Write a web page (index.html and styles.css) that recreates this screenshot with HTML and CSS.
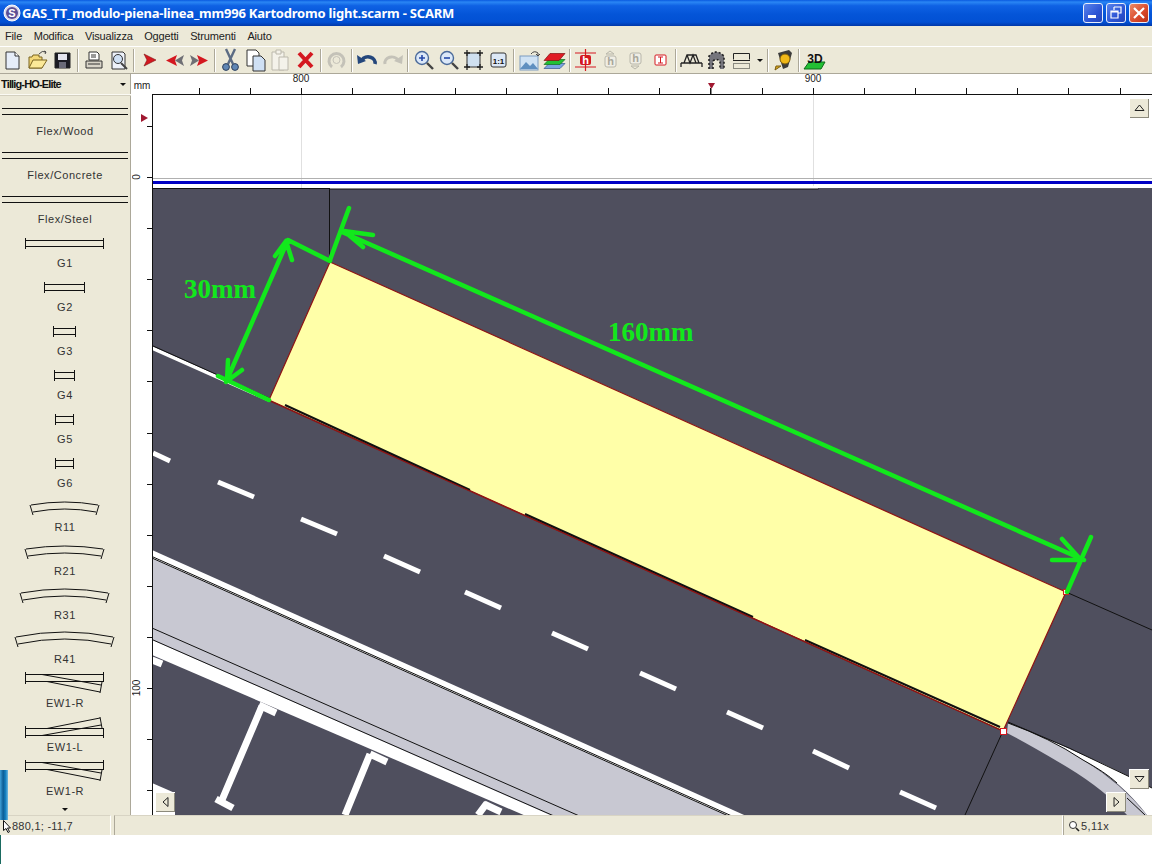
FILE: index.html
```html
<!DOCTYPE html>
<html lang="it">
<head>
<meta charset="utf-8">
<title>SCARM</title>
<link rel="stylesheet" href="styles.css">
</head>
<body>
<div class="app">
  <header class="titlebar">
    <svg class="appicon" viewBox="0 0 18 18" width="18" height="18"><circle cx="9" cy="9" r="8" fill="#d9d9ea" stroke="#ffffff"/><circle cx="9" cy="9" r="6" fill="#5b4f96"/><text x="9" y="13" class="appicon-s">S</text></svg>
    <span class="title-text">GAS_TT_modulo-piena-linea_mm996 Kartodromo light.scarm - SCARM</span>
    <div class="winbtns">
      <div class="winbtn"><svg viewBox="0 0 20 20" width="20" height="20"><rect x="5" y="12" width="8" height="3" fill="#fff"/></svg></div>
      <div class="winbtn"><svg viewBox="0 0 20 20" width="20" height="20"><path d="M8 4h7v6h-3M8 4v3M5 8h7v7H5zM5 9h7" fill="none" stroke="#fff" stroke-width="1.2"/></svg></div>
      <div class="winbtn close"><svg viewBox="0 0 20 20" width="20" height="20"><path d="M5 5l10 10M15 5L5 15" stroke="#fff" stroke-width="2.2"/></svg></div>
    </div>
  </header>

  <nav class="menubar">
    <span class="menu-item">File</span>
    <span class="menu-item">Modifica</span>
    <span class="menu-item">Visualizza</span>
    <span class="menu-item">Oggetti</span>
    <span class="menu-item">Strumenti</span>
    <span class="menu-item">Aiuto</span>
  </nav>

  <div class="toolbar">
    <svg class="tb" viewBox="0 0 25 26"><path d="M6 5h9l4 4v13H6z" fill="#e6edf8" stroke="#333"/><path d="M15 5v4h4" fill="#fff" stroke="#333"/></svg>
    <svg class="tb" viewBox="0 0 25 26"><path d="M4 21V10h3l1-2h6v2h3v11z" fill="#f3d878" stroke="#7a6420"/><path d="M4 21l4-8h14l-5 8z" fill="#fbe998" stroke="#7a6420"/><path d="M14 7q3-4 7-2m0 0l-2-1m2 1l-1 2" fill="none" stroke="#444"/></svg>
    <svg class="tb" viewBox="0 0 25 26"><path d="M5 6h15v15H5z" fill="#1c1c24" stroke="#222"/><rect x="8" y="7" width="9" height="6" fill="#e4e4ee"/><rect x="9" y="15" width="7" height="6" fill="#6a6a78"/></svg>
    <i class="sep"></i>
    <svg class="tb" viewBox="0 0 25 26"><path d="M8 5h8l2 2v6H8z" fill="#fff" stroke="#333"/><path d="M10 8h5M10 10h5" stroke="#333"/><path d="M5 14h16v7H5z" fill="#d8d4c8" stroke="#333"/><path d="M7 17h12" stroke="#333"/></svg>
    <svg class="tb" viewBox="0 0 25 26"><path d="M6 5h11l2 2v15H6z" fill="#eef2fa" stroke="#333"/><circle cx="12" cy="12" r="4.5" fill="#cfe0f4" stroke="#333"/><path d="M15 16l6 6" stroke="#444" stroke-width="2"/></svg>
    <i class="sep"></i>
    <svg class="tb" viewBox="0 0 25 26"><path d="M7 7l12 6-12 6 3-6z" fill="#d41820" stroke="#801010" stroke-width=".6"/></svg>
    <svg class="tb" viewBox="0 0 25 26"><path d="M15 8L4 13.500 15 19l-2-5.500z" fill="#d41820"/><path d="M22 8l-9 5.500 9 5.500-2-5.500z" fill="#6f6f74"/></svg>
    <svg class="tb" viewBox="0 0 25 26"><path d="M3 8l9 5.500L3 19l2-5.500z" fill="#6f6f74"/><path d="M10 8l11 5.500L10 19l2-5.500z" fill="#d41820"/></svg>
    <i class="sep"></i>
    <svg class="tb" viewBox="0 0 25 26"><path d="M8 2l7 15M17 2l-7 15" stroke="#5c6c84" stroke-width="2.4"/><circle cx="8" cy="20" r="3.4" fill="#5f86b4" stroke="#2d3f5c"/><circle cx="17" cy="20" r="3.4" fill="#5f86b4" stroke="#2d3f5c"/></svg>
    <svg class="tb" viewBox="0 0 25 26"><path d="M4 3h9l3 3v13H4z" fill="#fff" stroke="#333"/><path d="M10 9h8l4 4v11H10z" fill="#cfe0f4" stroke="#333"/></svg>
    <svg class="tb" viewBox="0 0 25 26"><path d="M4 5h12v18H4z" fill="#f4f2ea" stroke="#bbb8ac"/><path d="M8 3h5v4H8z" fill="#f4f2ea" stroke="#bbb8ac"/><path d="M11 10h9v13h-9z" fill="#f4f2ea" stroke="#bbb8ac"/></svg>
    <svg class="tb" viewBox="0 0 25 26"><path d="M6 6l13 14M19 6L6 20" stroke="#d41820" stroke-width="4"/></svg>
    <i class="sep"></i>
    <svg class="tb" viewBox="0 0 25 26"><path d="M8 20a7.500 7.500 0 1 1 9 0" fill="none" stroke="#c4c2b8" stroke-width="3"/><circle cx="12.500" cy="13" r="3.500" fill="none" stroke="#c4c2b8"/></svg>
    <i class="sep"></i>
    <svg class="tb" viewBox="0 0 25 26"><path d="M7 13a7 6 0 0 1 13 4" fill="none" stroke="#24477c" stroke-width="3.600"/><path d="M2 8l1 9 8-3z" fill="#24477c"/></svg>
    <svg class="tb" viewBox="0 0 25 26"><path d="M18 13a7 6 0 0 0-13 4" fill="none" stroke="#c4c2b8" stroke-width="3"/><path d="M23 8l-1 9-8-3z" fill="#c4c2b8"/></svg>
    <i class="sep"></i>
    <svg class="tb" viewBox="0 0 25 26"><circle cx="11" cy="11" r="6.500" fill="#dbe8f8" stroke="#4a6a9a" stroke-width="1.400"/><path d="M8 11h6M11 8v6" stroke="#2448a8" stroke-width="1.600"/><path d="M16 16l6 6" stroke="#444" stroke-width="2.400"/></svg>
    <svg class="tb" viewBox="0 0 25 26"><circle cx="11" cy="11" r="6.500" fill="#dbe8f8" stroke="#4a6a9a" stroke-width="1.400"/><path d="M8 11h6" stroke="#2448a8" stroke-width="1.600"/><path d="M16 16l6 6" stroke="#444" stroke-width="2.400"/></svg>
    <svg class="tb" viewBox="0 0 25 26"><rect x="6" y="6" width="13" height="14" fill="#cfe0f0" stroke="#333"/><path d="M3 6h6M6 3v6M16 6h6M19 3v6M3 20h6M6 17v6M16 20h6M19 17v6" stroke="#222" stroke-width="1.300"/></svg>
    <svg class="tb" viewBox="0 0 25 26"><rect x="5" y="6" width="15" height="14" rx="2" fill="#dce8f6" stroke="#333"/><text x="12.500" y="16.500" class="tb-txt">1:1</text></svg>
    <i class="sep"></i>
    <svg class="tb" viewBox="0 0 25 26"><rect x="3" y="9" width="18" height="14" fill="#cfe2f4" stroke="#7c9cc0"/><path d="M3 22l6-7 4 4 3-3 5 6z" fill="#5f8fc0"/><path d="M14 7q3-4 7-1v3m0 0l-2-2m2 2l2-2" fill="none" stroke="#444"/></svg>
    <svg class="tb" viewBox="0 0 25 26"><path d="M2 21.500l5-5h16l-5 5z" fill="#7aa4e0" stroke="#33558c" stroke-width=".7"/><path d="M2 17.500l5-5h16l-5 5z" fill="#22c034" stroke="#116a1c" stroke-width=".7"/><path d="M2 13.500l6-7h15l-6 7z" fill="#e01c24" stroke="#801010" stroke-width=".7"/></svg>
    <i class="sep"></i>
    <svg class="tb" viewBox="0 0 25 26"><path d="M2 6h21M2 20h21M12.500 2v22" stroke="#d41820" stroke-width="1.200"/><rect x="7" y="8" width="11" height="10" rx="2" fill="#d41820"/><text x="12.500" y="17" class="tb-h">h</text></svg>
    <svg class="tb" viewBox="0 0 25 26"><path d="M8 7l4-3 4 3z" fill="none" stroke="#b8b6aa"/><rect x="7" y="9" width="11" height="11" rx="2" fill="#efede4" stroke="#b8b6aa"/><text x="12.500" y="18" class="tb-h dim">h</text></svg>
    <svg class="tb" viewBox="0 0 25 26"><rect x="7" y="6" width="11" height="11" rx="2" fill="#efede4" stroke="#b8b6aa"/><text x="12.500" y="15" class="tb-h dim">h</text><path d="M8 19l4 3 4-3z" fill="none" stroke="#b8b6aa"/></svg>
    <svg class="tb" viewBox="0 0 25 26"><rect x="7" y="8" width="11" height="10" rx="1" fill="#fff" stroke="#d41820"/><path d="M10 10h5M10 16h5M12.500 10v6" stroke="#d41820"/></svg>
    <i class="sep"></i>
    <svg class="tb" viewBox="0 0 25 26"><path d="M2 16h21M2 16v4M23 16v4M5 16l3-8h9l3 8M8 8l3 8 3-8 3 8" fill="none" stroke="#222" stroke-width="1.300"/></svg>
    <svg class="tb" viewBox="0 0 25 26"><path d="M5 22V9q7-8 15 0v13h-4v-8q-3-3-7 0v8z" fill="#75757c"/><path d="M5 22V9q7-8 15 0v13M9 22v-8q3-3 7 0v8" fill="none" stroke="#222" stroke-width="1.600" stroke-dasharray="2 2"/></svg>
    <svg class="tb" viewBox="0 0 25 26"><path d="M4.500 12.500v-6h16v6M4 13.500h17" fill="none" stroke="#222"/><rect x="4.500" y="16.500" width="16" height="5" fill="#ece9d8" stroke="#8a8a80"/></svg>
    <span class="tb-drop"></span>
    <i class="sep"></i>
    <svg class="tb" viewBox="0 0 25 26"><path d="M7 6l11-3 3 3-4 14-5 2z" fill="#3c3c3c"/><circle cx="14" cy="12" r="5" fill="#f0b818" stroke="#7a5c10"/><path d="M10 19l-6 4 1-4z" fill="#d8a820" stroke="#7a5c10"/></svg>
    <i class="sep"></i>
    <svg class="tb" viewBox="0 0 25 26"><path d="M7 15h16l-4 7H2z" fill="#22c034" stroke="#0e6a1a"/><text x="13" y="16" class="tb-3d">3D</text></svg>
  </div>

  <main class="main">
    <aside class="sidebar">
      <div class="lib-head"><span class="lib-name">Tillig-HO-Elite</span><span class="lib-arrow"></span></div>
      <div class="lib-list">
        <div class="lib-item"><svg class="lib-ic" viewBox="0 0 130 29"><path d="M2 13.500h126M2 19.500h126"/></svg><span>Flex/Wood</span></div>
        <div class="lib-item"><svg class="lib-ic" viewBox="0 0 130 29"><path d="M2 13.500h126M2 19.500h126"/></svg><span>Flex/Concrete</span></div>
        <div class="lib-item"><svg class="lib-ic" viewBox="0 0 130 29"><path d="M2 13.500h126M2 19.500h126"/></svg><span>Flex/Steel</span></div>
        <div class="lib-item"><svg class="lib-ic" viewBox="0 0 130 29"><path d="M25.500 11v11M103.500 11v11M25 13.500h79M25 19.500h79"/></svg><span>G1</span></div>
        <div class="lib-item"><svg class="lib-ic" viewBox="0 0 130 29"><path d="M44.500 11v11M84.500 11v11M44 13.500h41M44 19.500h41"/></svg><span>G2</span></div>
        <div class="lib-item"><svg class="lib-ic" viewBox="0 0 130 29"><path d="M53.500 11v11M75.500 11v11M53 13.500h23M53 19.500h23"/></svg><span>G3</span></div>
        <div class="lib-item"><svg class="lib-ic" viewBox="0 0 130 29"><path d="M54.500 11v11M74.500 11v11M54 13.500h21M54 19.500h21"/></svg><span>G4</span></div>
        <div class="lib-item"><svg class="lib-ic" viewBox="0 0 130 29"><path d="M55.500 11v11M73.500 11v11M55 13.500h19M55 19.500h19"/></svg><span>G5</span></div>
        <div class="lib-item"><svg class="lib-ic" viewBox="0 0 130 29"><path d="M55.500 11v11M73.500 11v11M55 13.500h19M55 19.500h19"/></svg><span>G6</span></div>
        <div class="lib-item"><svg class="lib-ic" viewBox="0 0 130 29"><path d="M31 14Q65 8 98 14M33 21Q65 15 96 21M30 14l3 10M99 14l-3 10"/></svg><span>R11</span></div>
        <div class="lib-item"><svg class="lib-ic" viewBox="0 0 130 29"><path d="M26 14Q65 8 103 14M28 21Q65 15 101 21M25 14l3 10M104 14l-3 10"/></svg><span>R21</span></div>
        <div class="lib-item"><svg class="lib-ic" viewBox="0 0 130 29"><path d="M21 14Q65 6 108 14M23 21Q65 13 106 21M20 14l3 10M109 14l-3 10"/></svg><span>R31</span></div>
        <div class="lib-item"><svg class="lib-ic" viewBox="0 0 130 29"><path d="M16 14Q65 4 113 14M18 21Q65 11 111 21M15 14l3 10M114 14l-3 10"/></svg><span>R41</span></div>
        <div class="lib-item"><svg class="lib-ic" viewBox="0 0 130 29"><path d="M25.500 5v12M103.500 5v10M25 7.500h79M25 14.500h79M42 7.500L101 18M47 14.500L100 25M102 15l-2 11"/></svg><span>EW1-R</span></div>
        <div class="lib-item"><svg class="lib-ic" viewBox="0 0 130 29"><path d="M25.500 15v12M103.500 17v10M25 17.500h79M25 24.500h79M42 24.500L101 14M47 17.500L100 7M102 17L100 6"/></svg><span>EW1-L</span></div>
        <div class="lib-item"><svg class="lib-ic" viewBox="0 0 130 29"><path d="M25.500 5v12M103.500 5v10M25 7.500h79M25 14.500h79M42 7.500L101 18M47 14.500L100 25M102 15l-2 11"/></svg><span>EW1-R</span></div>
      </div>
      <div class="lib-more"></div>
    </aside>

    <section class="work">
      <svg class="ruler-top" viewBox="132 74 1020 21" width="1020" height="21">
        <rect x="132" y="74" width="1020" height="21" fill="#fff"/>
        <text x="142" y="89" class="rtxt">mm</text>
        <path class="tick" d="M152 94.500H1152M199.500 88v6M250.500 88v6M301.500 88v6M352.500 88v6M404.500 88v6M455.500 88v6M506.500 88v6M557.500 88v6M608.500 88v6M659.500 88v6M710.500 88v6M762.500 88v6M813.500 88v6M864.500 88v6M915.500 88v6M966.500 88v6M1017.500 88v6M1068.500 88v6M1120.500 88v6"/>
        <text x="301" y="82" class="rtxt">800</text>
        <text x="813" y="82" class="rtxt">900</text>
        <path d="M708 83h7l-3.500 6z" fill="#a01830"/>
        <path d="M711.500 89v5" stroke="#888"/>
      </svg>
      <div class="work-body">
        <svg class="ruler-left" viewBox="132 95 20 720" width="20" height="720">
          <rect x="132" y="95" width="20" height="720" fill="#fff"/>
          <path d="M141 114l7 4-7 4z" fill="#a01830"/>
          <path class="tick" d="M147 126.500h5M147 177.500h5M147 228.500h5M147 279.500h5M147 330.500h5M147 381.500h5M147 433.500h5M147 484.500h5M147 535.500h5M147 586.500h5M147 637.500h5M147 688.500h5M147 739.500h5M147 790.500h5"/>
          <text class="rtxt" transform="translate(140 177) rotate(-90)">0</text>
          <text class="rtxt" transform="translate(140 688) rotate(-90)">100</text>
        </svg>
        <div class="canvas">
          <svg class="drawing" viewBox="152 95 1000 720" width="1000" height="720">
            <rect x="152" y="95" width="1000" height="720" fill="#4f4f5e"/>
            <rect x="152" y="95" width="1000" height="93" fill="#fff"/>
            <path d="M301.500 95v93M813.500 95v93" stroke="#e0e0e0"/>
            <path d="M152 178.500h1000" stroke="#b0b0b0"/>
            <rect x="329" y="186" width="489" height="3" fill="#fff"/>
            <rect x="152" y="181" width="1000" height="3" fill="#0000c4"/>
            <path d="M152 188.500h177M329.500 189h489" stroke="#111"/>
            <path d="M329.500 188v74" stroke="#111"/>

            <path d="M152 348L269 400" stroke="#fff" stroke-width="3.500"/>
            <path d="M152 345.500L269 398" stroke="#111"/>

            <g stroke="#fff" stroke-width="5">
              <path d="M153 453l17 8M218 482l36 15M301 519l36 15M384 556l36 16M465 592l36 16M552 633l36 16M640 673l36 16M727 712l36 16M813 751l36 17M900 792l36 16"/>
            </g>

            <polygon points="152,550 800,840 800,934 152,655" fill="#fff"/>
            <polygon points="152,558 800,848 800,925 152,640" fill="#c8c8d2"/>
            <path d="M152 558L800 848M152 628L800 913M152 639.500L800 924" stroke="#111" fill="none"/>
            <path d="M152 556.500L800 846.500" stroke="#111"/>
            <g stroke="#fff">
              <path d="M262 706L222 800M370 754L345 815M487 803L478 815" stroke-width="7"/>
              <path d="M259 705l17 8M216 799l17 9M370 754l17 8M484 804l17 8M152 660l10 4" stroke-width="7"/>
            </g>
            <polygon points="152,783 175,793 175,815 152,815" fill="#fff"/>

            <path d="M1066 592L1152 630M1003 731L965 815" stroke="#111" fill="none"/>
            <path d="M1008 723Q1070 747 1130 777L1152 788V815H1147Q1120 780 1083 760Q1050 740 1008 723z" fill="#fff"/>
            <path d="M1008 723Q1050 738 1083 760Q1120 782 1147 815H1127Q1105 790 1067 767Q1030 745 1007 733z" fill="#c8c8d2"/>
            <path d="M1008 722Q1070 747 1130 777L1152 788M1008 723Q1050 738 1083 760Q1105 772 1117 783M1127 798L1145 815" stroke="#111" fill="none"/>

            <polygon points="330,262 1066,592 1003,731 269,400" fill="#ffffa8" stroke="#8e1414" stroke-width="1.200"/>
            <path d="M285 405L470 490M525 514L753 617M805 640L1000 727" stroke="#111" stroke-width="2"/>
            <path d="M270 401L1003 731" stroke="#8e1414" stroke-width="1.200"/>
            <rect x="1000.500" y="728.500" width="6" height="6" fill="#fff" stroke="#d41820"/>
            <rect x="1063.500" y="589.500" width="5" height="5" fill="#fff" stroke="#d41820"/>

            <g class="green">
              <path d="M330 261L288 240L226 382M218 376L269 400M275 256L286 241L292 260M228 360L227 381L242 370"/>
              <path d="M349 208L330 260M342 232L1084 560M373 235L344 231L363 247M1062 539L1081 560L1052 560M1091 537L1067 592"/>
            </g>
            <text x="184" y="298" class="note">30mm</text>
            <text x="608" y="341" class="note">160mm</text>
          </svg>
          <div class="sbtn up"><svg viewBox="0 0 20 20" width="20" height="20"><path d="M6 12.500h9L10.500 7z" fill="#ece9d8" stroke="#222"/></svg></div>
          <div class="sbtn down"><svg viewBox="0 0 20 20" width="20" height="20"><path d="M6 7.500h9L10.500 13z" fill="#ece9d8" stroke="#222"/></svg></div>
          <div class="sbtn left"><svg viewBox="0 0 20 20" width="20" height="20"><path d="M13 5.500v9L8 10z" fill="#ece9d8" stroke="#222"/></svg></div>
          <div class="sbtn right"><svg viewBox="0 0 20 20" width="20" height="20"><path d="M8 5.500v9l5-4.500z" fill="#ece9d8" stroke="#222"/></svg></div>
        </div>
      </div>
    </section>
  </main>

  <footer class="statusbar">
    <div class="st-cell st-pos">880,1; -11,7</div>
    <div class="st-cell st-mid"></div>
    <div class="st-cell st-zoom"><svg viewBox="0 0 12 12" width="12" height="12"><circle cx="5" cy="5" r="3.500" fill="#fff" stroke="#333"/><path d="M8 8l3 3" stroke="#222" stroke-width="1.600"/></svg><span>5,11x</span></div>
  </footer>

  <div class="taskedge"></div>
  <svg class="cursor" viewBox="0 0 8 13" width="8" height="13"><path d="M.5.500v10l2.500-2 2 4 1.500-.8-2-3.700h3z" fill="#fff" stroke="#111"/></svg>
  <div class="bottom-edge"></div>
</div>
</body>
</html>
```

FILE: styles.css
```css
* { box-sizing: border-box; }
html, body { margin: 0; padding: 0; background: #fff; }
body { font-family: "Liberation Sans", Arial, sans-serif; font-size: 11px; color: #111; overflow: hidden; }

.app { position: relative; width: 1152px; height: 864px; display: flex; flex-direction: column; overflow: hidden; }

.titlebar {
  height: 26px; flex: none; display: flex; align-items: center; padding-left: 3px; gap: 1px;
  background: linear-gradient(180deg, #0a5ae0 0%, #2a86f4 8%, #0f62e4 22%, #0455d8 55%, #0250d4 85%, #0138a8 100%);
}
.appicon { flex: none; }
.appicon-s { font: bold 11px "Liberation Sans", sans-serif; fill: #fff; text-anchor: middle; }
.title-text { font: bold 13px "Noto Sans", sans-serif; color: #fff; white-space: nowrap; letter-spacing: -.21px; }
.winbtns { margin-left: auto; display: flex; gap: 3px; padding-right: 3px; }
.winbtn {
  width: 20px; height: 20px; border: 1px solid #e8eefc; border-radius: 3px; overflow: hidden;
  background: linear-gradient(135deg, #5a84ec, #2c54d4 60%, #2444b8);
}
.winbtn svg { display: block; margin: -1px; }
.winbtn.close { background: linear-gradient(135deg, #ee8a66, #d8482a 60%, #b83018); }

.menubar {
  height: 21px; flex: none; display: flex; align-items: center; padding-left: 5px; gap: 11.5px; letter-spacing: -.15px;
  background: #ece9d8; border-bottom: 1px solid #fff;
}
.menu-item { white-space: nowrap; color: #222; }

.toolbar {
  height: 27px; flex: none; display: flex; align-items: center; background: #ece9d8; border-bottom: 1px solid #aca899;
}
.tb { width: 25px; height: 26px; flex: none; display: block; }
.sep { display: block; width: 6px; height: 23px; flex: none; margin: 0; border-left: 2px solid transparent; background: linear-gradient(90deg, #aca899 0 1px, #fff 1px 2px, transparent 2px); background-origin: content-box; background-clip: content-box; }
.tb-txt { font: bold 8px "Liberation Sans", sans-serif; text-anchor: middle; fill: #111; }
.tb-h { font: bold 11px "Liberation Sans", sans-serif; text-anchor: middle; fill: #fff; }
.tb-h.dim { fill: #a8a69a; }
.tb-3d { font: bold 12px "Liberation Sans", sans-serif; text-anchor: middle; fill: #111; }
.tb-drop { width: 11px; flex: none; display: flex; justify-content: center; }
.tb-drop::before { content: ""; border: 3px solid transparent; border-top: 3px solid #111; border-bottom: 0; }

.main { height: 741px; flex: none; display: flex; }
.sidebar { width: 132px; flex: none; background: #ece9d8; border-right: 1px solid #fff; box-shadow: inset -1px 0 0 #aca899; overflow: hidden; }
.lib-head { height: 21px; display: flex; align-items: center; justify-content: space-between; padding: 0 5px 0 1px; border-bottom: 1px solid #fbfaf4; box-shadow: 0 1px 0 #d4d0c0; }
.lib-name { font-size: 11px; font-weight: bold; letter-spacing: -.85px; white-space: nowrap; }
.lib-arrow { border: 3px solid transparent; border-top: 3px solid #111; border-bottom: 0; }
.lib-list { display: flex; flex-direction: column; width: 130px; }
.lib-item { height: 44px; display: flex; flex-direction: column; align-items: center; color: #333; letter-spacing: .55px; }
.lib-item span { height: 14px; line-height: 14px; white-space: nowrap; }
.lib-ic { width: 130px; height: 29px; display: block; flex: none; fill: none; stroke: #111; }
.lib-more { width: 0; height: 0; margin: 9px 0 0 62px; border: 3px solid transparent; border-top: 3px solid #111; border-bottom: 0; }

.work { flex: 1; display: flex; flex-direction: column; min-width: 0; }
.ruler-top { display: block; flex: none; }
.work-body { display: flex; flex: 1; }
.ruler-left { display: block; flex: none; }
.rtxt { font: 10px "Liberation Sans", sans-serif; text-anchor: middle; fill: #222; }
.tick { stroke: #111; fill: none; }

.canvas { position: relative; width: 1000px; height: 720px; }
.canvas::before { content: ""; position: absolute; left: 0; top: 0; bottom: 0; width: 1px; background: #111; z-index: 1; }
.drawing { display: block; }
.green { fill: none; stroke: #12e81c; stroke-width: 4.5; stroke-linecap: round; stroke-linejoin: round; }
.note { font: bold 27px "Liberation Serif", serif; fill: #12e81c; }

.sbtn {
  position: absolute; width: 20px; height: 20px; background: #ece9d8; z-index: 2;
  box-shadow: inset 1px 1px 0 #fff, inset -1px -1px 0 #8c8a7c;
}
.sbtn svg { display: block; }
.sbtn.up { left: 977px; top: 3px; }
.sbtn.down { left: 977px; top: 674px; }
.sbtn.left { left: 3px; top: 697px; }
.sbtn.right { left: 954px; top: 697px; }

.statusbar { height: 20px; flex: none; display: flex; background: #ece9d8; }
.st-cell { height: 20px; display: flex; align-items: center; border-top: 1px solid #d8d4c4; }
.st-pos { width: 111px; padding-left: 12px; border-right: 1px solid #fff; color: #333; letter-spacing: .25px; }
.st-mid { margin-left: 3px; width: 949px; border-left: 1px solid #aca899; border-right: 1px solid #fff; }
.st-zoom { flex: 1; padding-left: 4px; gap: 1px; border-left: 1px solid #aca899; color: #333; letter-spacing: .4px; }
.st-zoom svg { display: block; }

.taskedge {
  position: absolute; left: 0; top: 770px; width: 8px; height: 50px; z-index: 3;
  background: linear-gradient(90deg, #3fa0d8, #0c5c94 40%, #1480c0 70%, #70b8e0);
}
.cursor { position: absolute; left: 3px; top: 820px; z-index: 4; }
.bottom-edge { position: absolute; left: 0; top: 835px; width: 1px; height: 29px; background: #1a6a60; }
```
